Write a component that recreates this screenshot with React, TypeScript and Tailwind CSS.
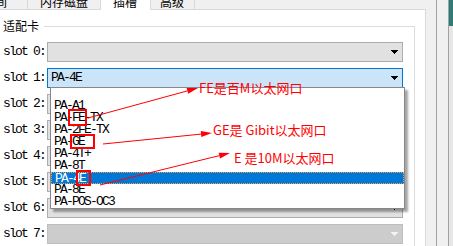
import React from 'react';

const items = ['', 'PA-A1', 'PA-FE-TX', 'PA-2FE-TX', 'PA-GE', 'PA-4T+', 'PA-8T', 'PA-4E', 'PA-8E', 'PA-POS-OC3'];

const Arrow = ({ light }: { light?: boolean }) => (
  <svg width="7" height="4" viewBox="0 0 7 4" shapeRendering="crispEdges">
    <path d="M0 0h7v1h-1v1h-1v1h-1v1h-1v-1h-1v-1h-1v-1h-1z" fill={light ? '#f4f4f4' : '#000'} />
  </svg>
);

type ComboState = 'normal' | 'focus' | 'disabled';

const Combo = ({ value, state }: { value?: string; state: ComboState }) => {
  const box =
    state === 'focus'
      ? 'border-[#0078d7] bg-[#cce4f7]'
      : state === 'disabled'
      ? 'border-[#bfbfbf] bg-[#cccccc]'
      : 'border-[#adadad] bg-[#e1e1e1]';
  return (
    <div className={`flex h-[20px] w-[356px] items-center border pl-[3px] pr-[4px] ${box}`}>
      <span className="flex-1 font-['Liberation_Mono',monospace] text-[13px] leading-[12px] tracking-[-1.8px] text-black">
        {value}
      </span>
      <Arrow light={state === 'disabled'} />
    </div>
  );
};

// arrow line with a filled head, head points at (x2, y2)
const RedArrow = ({ x1, y1, x2, y2 }: { x1: number; y1: number; x2: number; y2: number }) => {
  const len = Math.hypot(x2 - x1, y2 - y1);
  const ux = (x2 - x1) / len;
  const uy = (y2 - y1) / len;
  const bx = x2 - ux * 11;
  const by = y2 - uy * 11;
  const pts = `${x2},${y2} ${bx - uy * 3},${by + ux * 3} ${bx + uy * 3},${by - ux * 3}`;
  return (
    <g>
      <line x1={x1} y1={y1} x2={bx} y2={by} stroke="#ff0000" strokeWidth="1" />
      <polygon points={pts} fill="#ff0000" />
    </g>
  );
};

export default function App() {
  const rows: { value?: string; state: ComboState }[] = [
    { state: 'normal' },
    { value: 'PA-4E', state: 'focus' },
    { state: 'normal' },
    { state: 'normal' },
    { state: 'normal' },
    { state: 'normal' },
    { state: 'normal' },
    { state: 'disabled' },
  ];

  return (
    <div className="relative flex h-[246px] w-[453px] overflow-hidden bg-[#f0f0f0] font-['Noto_Sans_CJK_SC',sans-serif]">
      <div className="flex w-[426px] flex-col">
        {/* tabs */}
        <div className="flex h-[9px] text-[12px] leading-[12px] text-black">
          <div className="flex h-[9px] w-[28px] items-end overflow-hidden border-r border-[#d9d9d9] bg-[#f0f0f0] pb-[1px]">
            <span className="ml-[-5px]">间</span>
          </div>
          <div className="flex h-[9px] w-[73px] items-end overflow-hidden border-r border-[#d9d9d9] bg-[#f0f0f0] pb-[1px] pl-[12px]">
            <span>内存磁盘</span>
          </div>
          <div className="relative z-10 flex h-[10px] w-[50px] items-end overflow-hidden border-r border-[#d9d9d9] bg-white pb-[2px] pl-[12px]">
            <span>插槽</span>
          </div>
          <div className="flex h-[9px] w-[44px] items-end overflow-hidden border-r border-[#d9d9d9] bg-[#f0f0f0] pb-[1px] pl-[9px]">
            <span>高级</span>
          </div>
        </div>

        {/* tab page */}
        <div className="flex flex-1 flex-col border-t border-r border-[#d9d9d9] bg-white">
          <div className="mr-[10px] flex flex-1 flex-col">
            <div className="mt-[10px] flex h-[12px]">
              <span className="pl-[3px] pr-[5px] text-[12px] leading-[12px] text-black">适配卡</span>
              <div className="mt-[6px] flex-1 border-t border-r border-[#dcdcdc]" />
            </div>
            <div className="flex flex-1 flex-col gap-[6px] border-r border-[#dcdcdc] pt-[10px]">
              {rows.map((r, i) => (
                <div key={i} className="flex items-center">
                  <span className="w-[47px] pl-[3px] font-['Liberation_Mono',monospace] text-[13px] leading-[12px] tracking-[-1.8px] text-black">
                    slot {i}:
                  </span>
                  <Combo value={r.value} state={r.state} />
                </div>
              ))}
            </div>
          </div>
        </div>
      </div>

      {/* right edge of the neighbouring window */}
      <div className="flex flex-1">
        <div className="w-[10px]" />
        <div className="w-px bg-[#a0a0a0]" />
        <div className="w-[11px] bg-[#f0f0f0]" />
        <div className="w-px bg-[#a0a0a0]" />
        <div className="flex flex-1 flex-col">
          <div className="h-[26px] bg-[#2f7a76]" />
          <div className="flex-1 bg-[#e6e6e6]" />
        </div>
      </div>

      {/* open dropdown list */}
      <div className="absolute left-[50px] top-[87px] w-[355px] border border-[#828790] bg-white shadow-[3px_3px_2px_rgba(0,0,0,0.35)]">
        {items.map((it) => (
          <div
            key={it || 'empty'}
            className={`h-[12px] pl-[3px] font-['Liberation_Mono',monospace] text-[13px] leading-[12px] tracking-[-1.8px] ${
              it === 'PA-4E'
                ? 'border border-dotted border-[#f5a040] bg-[#0078d7] pl-[2px] leading-[10px] text-white'
                : 'text-black'
            }`}
          >
            {it}
          </div>
        ))}
      </div>

      {/* annotations */}
      <svg className="pointer-events-none absolute left-0 top-0" width="453" height="246">
        <rect x="69" y="110" width="17" height="15" fill="none" stroke="#ff0000" strokeWidth="2" />
        <rect x="71" y="135" width="23" height="13" fill="none" stroke="#ff0000" strokeWidth="2" />
        <rect x="77" y="171" width="13" height="14" fill="none" stroke="#ff0000" strokeWidth="2" />
        <RedArrow x1={88} y1={118} x2={198} y2={88} />
        <RedArrow x1={103} y1={144} x2={212} y2={133} />
        <RedArrow x1={100} y1={185} x2={230} y2={153} />
      </svg>
      <span className="absolute left-[199px] top-[80px] text-[13px] leading-[16px] text-[#ff0000]">FE是百M以太网口</span>
      <span className="absolute left-[213px] top-[122px] text-[13px] leading-[16px] text-[#ff0000]">GE是 Gibit以太网口</span>
      <span className="absolute left-[234px] top-[150px] text-[13px] leading-[16px] text-[#ff0000]">E 是10M以太网口</span>
    </div>
  );
}
